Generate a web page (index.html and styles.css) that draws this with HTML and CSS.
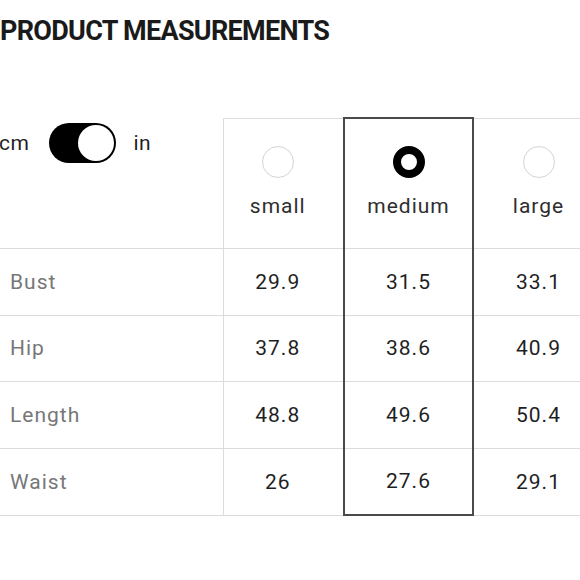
FILE: index.html
```html
<!DOCTYPE html>
<html lang="en">
<head>
<meta charset="utf-8">
<title>Product measurements</title>
<link rel="stylesheet" href="styles.css">
</head>
<body>
<h1 class="title">PRODUCT MEASUREMENTS</h1>
<table class="sizes">
  <colgroup>
    <col class="c-label"><col class="c-small"><col class="c-med"><col class="c-large">
  </colgroup>
  <thead>
    <tr>
      <th class="unit-cell">
        <div class="units">
          <span class="unit">cm</span>
          <span class="toggle"><span class="knob"></span></span>
          <span class="unit">in</span>
        </div>
      </th>
      <th class="size small"><span class="radio"></span><span class="size-name">small</span></th>
      <th class="size med"><span class="radio on"></span><span class="size-name">medium</span></th>
      <th class="size"><span class="radio"></span><span class="size-name">large</span></th>
    </tr>
  </thead>
  <tbody>
    <tr><td class="label">Bust</td><td class="small">29.9</td><td class="med">31.5</td><td>33.1</td></tr>
    <tr><td class="label">Hip</td><td class="small">37.8</td><td class="med">38.6</td><td>40.9</td></tr>
    <tr><td class="label">Length</td><td class="small">48.8</td><td class="med">49.6</td><td>50.4</td></tr>
    <tr class="last"><td class="label">Waist</td><td class="small">26</td><td class="med">27.6</td><td>29.1</td></tr>
  </tbody>
</table>
</body>
</html>
```

FILE: styles.css
```css
html, body {
  margin: 0;
  padding: 0;
  background: #fff;
  overflow: hidden;
}
body {
  width: 580px;
  height: 580px;
  font-family: Roboto, "Liberation Sans", sans-serif;
  color: #222;
}
.title {
  margin: 14px 0 0 0;
  font-size: 27px;
  line-height: 34px;
  font-weight: 700;
  letter-spacing: -0.7px;
  color: #1a1a1a;
}
.sizes {
  margin-top: 69px;
  border-collapse: collapse;
  table-layout: fixed;
  width: 603px;
}
.c-label { width: 223px; }
.c-small { width: 121px; }
.c-med { width: 129px; }
.c-large { width: 130px; }

th, td {
  padding: 0;
  font-weight: 400;
  font-size: 21px;
  letter-spacing: 1px;
  text-align: center;
  border-left: 1px solid #dcdcdc;
  border-bottom: 1px solid #dcdcdc;
}
th {
  height: 129px;
  vertical-align: top;
  border-top: 1px solid #dcdcdc;
  color: #2e2e2e;
}
th.unit-cell {
  border-top: none;
  border-left: none;
  text-align: left;
}
td {
  height: 65.5px;
  vertical-align: middle;
  color: #1f1f1f;
}
td.label {
  border-left: none;
  text-align: left;
  padding-left: 10px;
  color: #777;
}
.small { padding-right: 11px; }

.units {
  display: flex;
  align-items: center;
  margin-top: 5px;
  margin-left: -1px;
}
.unit {
  font-size: 21px;
  color: #1f1f1f;
  letter-spacing: 0.5px;
}
.toggle {
  margin: 0 17px 0 20px;
  width: 67px;
  height: 40px;
  border-radius: 20px;
  background: #000;
  display: flex;
  align-items: center;
  justify-content: flex-end;
  padding-right: 2px;
  box-sizing: border-box;
}
.knob {
  width: 36px;
  height: 36px;
  border-radius: 50%;
  background: #fff;
}

.size .radio {
  display: block;
  margin: 27px auto 0;
  width: 32px;
  height: 32px;
  border-radius: 50%;
  border: 1.5px solid #d4d4d4;
  box-sizing: border-box;
}
.size .radio.on {
  border: 8px solid #000;
}
.size-name {
  display: block;
  margin-top: 16px;
  line-height: 24px;
}

.med {
  border-left: 2px solid #4a4a4a;
  border-right: 2px solid #4a4a4a;
}
th.med { border-top: 2px solid #4a4a4a; }
tr.last td.med { border-bottom: 2px solid #4a4a4a; }
```
